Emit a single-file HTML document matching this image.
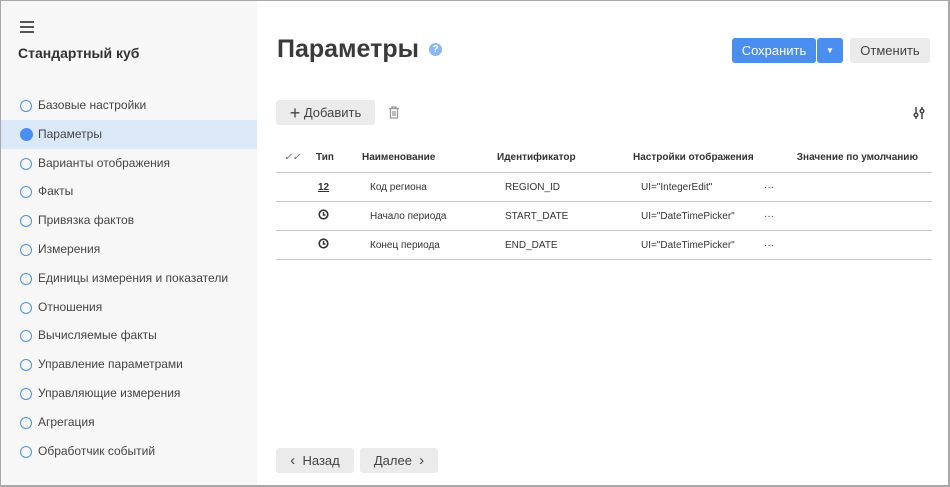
<!DOCTYPE html>
<html><head><meta charset="utf-8"><style>
*{box-sizing:border-box;margin:0;padding:0}
html,body{width:950px;height:487px;overflow:hidden;background:#fff}
body{font-family:"Liberation Sans",sans-serif;color:#333;position:relative}
.frame{position:absolute;left:0;top:0;width:950px;height:487px;border:1px solid #a8a8a8;border-right-width:2px;border-bottom-width:2px}
.side{position:absolute;left:1px;top:1px;width:256px;height:484px;background:#f7f7f7}
.ham{position:absolute;left:19px;top:20px;width:14px}
.ham i{display:block;height:2px;background:#555;margin-bottom:3px}
.cube{position:absolute;left:17px;top:44px;font-size:14px;font-weight:bold;color:#333}
.nav{position:absolute;left:0;top:90px;width:256px}
.nav div{height:28.8px;line-height:28.8px;padding-left:37px;font-size:12px;color:#444;position:relative}
.nav div:before{content:"";position:absolute;left:19px;top:9px;width:10px;height:10px;border:1px solid #4a90e2;border-radius:50%}
.nav div.a{background:#dae8f8}
.nav div.a:before{background:#4a8ff0;border-color:#4a8ff0;width:11px;height:11px;top:8px}
h1{position:absolute;left:277px;top:35px;font-size:25px;font-weight:bold;color:#3a3a3a}
.q{position:absolute;left:429px;top:43px;width:13px;height:13px;border-radius:50%;background:#8ab8f0;color:#fff;font-size:10px;font-weight:bold;text-align:center;line-height:13px}
.btn{position:absolute;height:25px;line-height:25px;border-radius:3px;font-size:13px;text-align:center}
.save{left:732px;top:38px;width:84px;background:#4a8ff0;color:#fff}
.dd{left:817px;top:38px;width:26px;background:#4a8ff0;color:#fff;font-size:8px}
.cancel{left:850px;top:38px;width:80px;background:#ebebeb;color:#444}
.add{left:276px;top:100px;width:99px;background:#ebebeb;color:#444}
.grey{background:#ebebeb;color:#444}
table{position:absolute;left:276px;top:143px;width:656px;border-collapse:collapse;font-size:10px}
th{font-weight:bold;text-align:left;height:29px;border-bottom:1px solid #c8c8c8;color:#333}
td{height:29px;border-bottom:1px solid #c8c8c8;color:#333;padding-top:1px}
</style></head><body>
<div class="frame"></div>
<div class="side">
<div class="ham"><i></i><i></i><i></i></div>
<div class="cube">Стандартный куб</div>
<div class="nav">
<div>Базовые настройки</div><div class="a">Параметры</div><div>Варианты отображения</div><div>Факты</div><div>Привязка фактов</div><div>Измерения</div><div>Единицы измерения и показатели</div><div>Отношения</div><div>Вычисляемые факты</div><div>Управление параметрами</div><div>Управляющие измерения</div><div>Агрегация</div><div>Обработчик событий</div>
</div></div>
<h1>Параметры</h1><div class="q">?</div>
<div class="btn save">Сохранить</div><div class="btn dd">▼</div><div class="btn cancel">Отменить</div>
<div class="btn add"><span style="font-size:18px;vertical-align:-2px">+</span> Добавить</div>
<svg style="position:absolute;left:388px;top:106px" width="12" height="13" viewBox="0 0 12 13" fill="none" stroke="#999" stroke-width="1.3"><path d="M1 2.5h10M4 2.5V1h4v1.5M2.5 3v9h7V3M5 5v5M7 5v5"/></svg>
<svg style="position:absolute;left:912px;top:106px" width="14" height="14" viewBox="0 0 14 14" fill="none" stroke="#444" stroke-width="1.5"><path d="M4 1v12M10 1v12"/><circle cx="4" cy="9" r="1.8" fill="#fff"/><circle cx="10" cy="5" r="1.8" fill="#fff"/></svg>
<table>
<tr><th style="width:40px;padding-left:8px;color:#666;font-style:italic;font-weight:normal">✓✓</th><th style="width:46px">Тип</th><th style="width:135px">Наименование</th><th style="width:136px">Идентификатор</th><th style="width:130px">Настройки отображения</th><th style="text-align:right;padding-right:14px">Значение по умолчанию</th></tr>
<tr><td></td><td style="font-weight:bold;text-decoration:underline;padding-left:2px">12</td><td style="padding-left:8px">Код региона</td><td style="padding-left:8px">REGION_ID</td><td style="padding-left:8px">UI="IntegerEdit"</td><td style="padding-left:1px">···</td></tr>
<tr><td></td><td style="padding-left:2px"><svg width="11" height="11" viewBox="0 0 11 11"><circle cx="5.5" cy="5.5" r="4.3" fill="none" stroke="#333" stroke-width="1.6"/><path d="M5.5 3v3h2" stroke="#333" stroke-width="1.4" fill="none"/></svg></td><td style="padding-left:8px">Начало периода</td><td style="padding-left:8px">START_DATE</td><td style="padding-left:8px">UI="DateTimePicker"</td><td style="padding-left:1px">···</td></tr>
<tr><td></td><td style="padding-left:2px"><svg width="11" height="11" viewBox="0 0 11 11"><circle cx="5.5" cy="5.5" r="4.3" fill="none" stroke="#333" stroke-width="1.6"/><path d="M5.5 3v3h2" stroke="#333" stroke-width="1.4" fill="none"/></svg></td><td style="padding-left:8px">Конец периода</td><td style="padding-left:8px">END_DATE</td><td style="padding-left:8px">UI="DateTimePicker"</td><td style="padding-left:1px">···</td></tr>
</table>
<div class="btn grey" style="left:276px;top:448px;width:78px"><b style="font-weight:normal;font-size:15px">‹</b>&nbsp; Назад</div>
<div class="btn grey" style="left:360px;top:448px;width:78px">Далее &nbsp;<b style="font-weight:normal;font-size:15px">›</b></div>
</body></html>
